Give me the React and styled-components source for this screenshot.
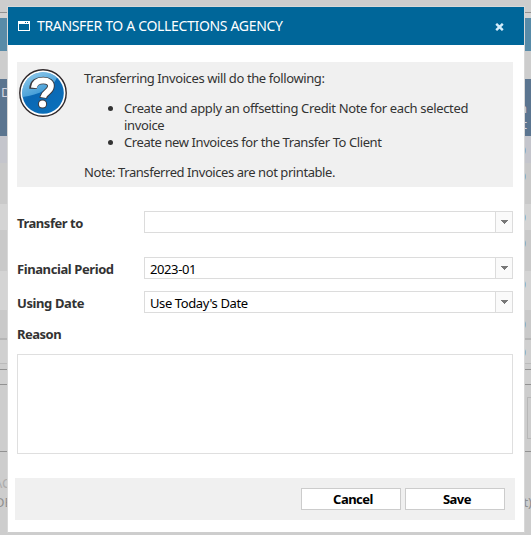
import React from 'react';
import styled, { createGlobalStyle } from 'styled-components';

const Global = createGlobalStyle`
  * { box-sizing: border-box; }
  html, body { margin: 0; padding: 0; overflow: hidden; }
  body { font: 13px/17px "Noto Sans", "Open Sans", sans-serif; color: #333; }
`;

const Screen = styled.div`
  position: relative;
  width: 531px;
  height: 535px;
  overflow: hidden;
  background: #cdcdcd;
`;

const Backdrop = styled.div`
  display: flex;
  flex-direction: column;
  height: 100%;
`;

const Band = styled.div`
  flex: none;
  display: flex;
  justify-content: space-between;
  align-items: ${(p) => p.$align || 'center'};
  height: ${(p) => p.$h}px;
  padding-top: ${(p) => (p.$align ? 5 : 0)}px;
  background: ${(p) => p.$bg || '#cdcdcd'};
  color: ${(p) => p.$fg || '#8f8f8f'};
  line-height: 16px;
  white-space: pre;
`;

const BandLeft = styled.span`
  margin-left: ${(p) => p.$x || 0}px;
`;

const BandRight = styled.span`
  margin-right: ${(p) => p.$x || 0}px;
  text-align: right;
`;

const SideBox = styled.div`
  width: 4px;
  height: 42px;
  margin: 0 0 0 auto;
  border: 1px solid #b7b7b7;
  border-right: 0;
`;

const Dialog = styled.section`
  position: absolute;
  left: 7px;
  top: 6px;
  width: 518px;
  height: 527px;
  display: flex;
  flex-direction: column;
  border: 1px solid #d8d8d8;
  border-bottom-color: #cecece;
  background: #fff;
`;

const TitleBar = styled.header`
  flex: none;
  display: flex;
  align-items: center;
  height: 38px;
  padding: 0 20px 0 10px;
  background: #006699;
  color: #fff;
`;

const Title = styled.h1`
  flex: 1;
  margin: 0 0 0 7px;
  font-size: 14px;
  font-weight: 400;
  line-height: 20px;
  white-space: nowrap;
  letter-spacing: -0.33px;
`;

const CloseButton = styled.button`
  display: flex;
  padding: 2px 0 0;
  border: 0;
  background: none;
`;

const Notice = styled.div`
  flex: none;
  display: flex;
  height: 125px;
  margin: 17px 11px 0 9px;
  padding: 7px 0 0 2px;
  background: #f0f0f0;
`;

const NoticeText = styled.div`
  margin-left: 17px;
  padding-top: 1px;
`;

const Line = styled.div`
  white-space: nowrap;
  letter-spacing: ${(p) => p.$ls || 0}px;
`;

const List = styled.ul`
  margin: 13px 0;
  padding: 0 0 0 40px;
`;

const Form = styled.div`
  display: grid;
  grid-template-columns: 127px 369px;
  grid-auto-rows: 22px;
  row-gap: 12px;
  margin: 24px 11px 0 9px;
`;

const Label = styled.label`
  align-self: center;
  padding-top: 2px;
  font-weight: 700;
  white-space: nowrap;
  letter-spacing: ${(p) => p.$ls || 0}px;
`;

const Select = styled.div`
  display: flex;
  height: 22px;
  border: 1px solid #dcdcdc;
  background: #fff;
  color: #000;
`;

const Value = styled.span`
  flex: 1;
  padding: 3px 0 0 5px;
  line-height: 17px;
  white-space: nowrap;
  letter-spacing: ${(p) => p.$ls || 0}px;
`;

const Trigger = styled.span`
  width: 17px;
  padding: 8px 0 0 5px;
  border-left: 1px solid #dcdcdc;
  background: #fafafa;

  svg { display: block; }
`;

const ReasonLabel = styled(Label)`
  align-self: flex-start;
  margin: 11px 0 0 9px;
`;

const Reason = styled.textarea`
  flex: none;
  height: 100px;
  margin: 11px 11px 0 9px;
  border: 1px solid #dfdfdf;
  background: #fff;
  resize: none;
  outline: 0;
`;

const Footer = styled.footer`
  flex: none;
  display: flex;
  justify-content: flex-end;
  gap: 4px;
  height: 42px;
  margin: 24px 9px 0 7px;
  padding: 10px 10px 0 0;
  background: #f0f0f0;
`;

const Button = styled.button`
  width: 100px;
  height: 22px;
  padding: 0 0 0 4px;
  border: 1px solid #ccc;
  background: #fff;
  color: #000;
  font: 700 13px/20px "Noto Sans", "Open Sans", sans-serif;
  letter-spacing: ${(p) => p.$ls || 0}px;
`;

const WindowIcon = () => (
  <svg width="12" height="10" viewBox="0 0 12 10" shapeRendering="crispEdges">
    <path d="M0 0h12v10H0zM1 3v6h10V3zM7 1v1h1V1zM9 1v1h1V1z" fill="#fff" fillRule="evenodd" />
  </svg>
);

const CloseIcon = () => (
  <svg width="9" height="8" viewBox="0 0 9 8">
    <path d="M1.2.8 7.8 7.2M7.8.8 1.2 7.2" stroke="#d3ecfa" strokeWidth="2.4" />
  </svg>
);

const Caret = () => (
  <svg width="7" height="4" viewBox="0 0 7 4" shapeRendering="crispEdges">
    <path d="M0 0h7v1H6v1H5v1H4v1H3V3H2V2H1V1H0z" fill="#777" />
  </svg>
);

const QuestionIcon = () => (
  <svg width="48" height="48" viewBox="0 0 48 48">
    <defs>
      <linearGradient id="ball" x1="0" y1="0" x2="0.7" y2="1">
        <stop offset="0" stopColor="#3a9ad6" />
        <stop offset="0.5" stopColor="#0a68b4" />
        <stop offset="1" stopColor="#0a6fba" />
      </linearGradient>
      <linearGradient id="gloss" x1="0" y1="0" x2="0.6" y2="1">
        <stop offset="0" stopColor="#a9d8f2" />
        <stop offset="1" stopColor="#3f9fda" />
      </linearGradient>
    </defs>
    <circle cx="24" cy="24" r="23.2" fill="#fff" stroke="#30282a" strokeWidth="1.4" />
    <circle cx="24" cy="24" r="20.8" fill="url(#ball)" />
    <path d="M3.6 28A20.8 20.8 0 0 1 38 8.6C34 19 20 26 3.6 28z" fill="url(#gloss)" opacity=".85" />
    <g fill="none">
      <path d="M14 19.8c.2-5.9 4.6-8.3 10.3-8.3 5.2 0 8 2.5 7.6 6-.6 5.6-6.8 5.7-7.7 11.8" stroke="#3d3a3e" strokeWidth="7.6" />
      <circle cx="23.5" cy="35" r="4.6" fill="#3d3a3e" />
      <path d="M14.8 18.8c.6-5 4.4-7.3 9.5-7.3 5.2 0 8 2.5 7.6 6-.6 5.6-6.8 5.7-7.7 10.9" stroke="#fff" strokeWidth="5.8" />
      <circle cx="23.5" cy="35" r="3.6" fill="#fff" />
    </g>
  </svg>
);

const rows = [
  [27, '#c4c5cc'],
  [41, '#c9c9c9', 'flex-start'],
  [26, '#d4d4d4'],
  [41, '#c9c9c9', 'flex-start'],
  [39, '#d4d4d4', 'flex-start'],
  [28, '#c9c9c9'],
];

const Dropdown = ({ value, ls }) => (
  <Select>
    <Value $ls={ls}>{value}</Value>
    <Trigger><Caret /></Trigger>
  </Select>
);

export default function App() {
  return (
    <Screen>
      <Global />
      <Backdrop>
        <Band $h={12} />
        <Band $h={1} $bg="#929292" />
        <Band $h={5} $bg="#d2d2d2" />
        <Band $h={33} $bg="#588ba8" />
        <Band $h={28} />
        <Band $h={57} $bg="#5b7590" $fg="#d5d5e2" $align="flex-start">
          <BandLeft $x={1}>D</BandLeft>
          <BandRight $x={4}>{' \nn\nt'}</BandRight>
        </Band>
        {rows.map(([h, bg, align], i) => (
          <Band key={i} $h={h} $bg={bg} $fg="#67718f" $align={align}>
            <BandLeft />
            <BandRight $x={5}>0</BandRight>
          </Band>
        ))}
        <Band $h={2} $bg="#b5b5b5" />
        <Band $h={23} $bg="#d0d0d0" $fg="#67718f">
          <BandLeft />
          <BandRight $x={5}>0</BandRight>
        </Band>
        <Band $h={1} $bg="#bbbbbb" />
        <Band $h={5} />
        <Band $h={1} $bg="#929292" />
        <Band $h={14} $bg="#d0d0d0" />
        <Band $h={1} $bg="#929292" />
        <Band $h={66}><SideBox /></Band>
        <Band $h={1} $bg="#929292" />
        <Band $h={22} />
        <Band $h={18} $fg="#acacac"><BandLeft $x={-6}>AC</BandLeft></Band>
        <Band $h={19}>
          <BandLeft $x={-5}>DE</BandLeft>
          <BandRight $x={-1}>t)</BandRight>
        </Band>
      </Backdrop>
      <Dialog>
        <TitleBar>
          <WindowIcon />
          <Title>TRANSFER TO A COLLECTIONS AGENCY</Title>
          <CloseButton aria-label="Close"><CloseIcon /></CloseButton>
        </TitleBar>
        <Notice>
          <QuestionIcon />
          <NoticeText>
            <Line $ls={-0.4}>Transferring Invoices will do the following:</Line>
            <List>
              <li>
                <Line $ls={-0.35}>Create and apply an offsetting Credit Note for each selected</Line>
                <Line $ls={-0.35}>invoice</Line>
              </li>
              <li><Line $ls={-0.41}>Create new Invoices for the Transfer To Client</Line></li>
            </List>
            <Line $ls={-0.43}>Note: Transferred Invoices are not printable.</Line>
          </NoticeText>
        </Notice>
        <Form>
          <Label $ls={-0.45}>Transfer to</Label>
          <Dropdown value="" />
        </Form>
        <Form>
          <Label $ls={-0.41}>Financial Period</Label>
          <Dropdown value="2023-01" ls={-0.4} />
          <Label $ls={-0.4}>Using Date</Label>
          <Dropdown value="Use Today's Date" ls={-0.4} />
        </Form>
        <ReasonLabel $ls={-0.5}>Reason</ReasonLabel>
        <Reason />
        <Footer>
          <Button $ls={-0.5}>Cancel</Button>
          <Button $ls={-0.5}>Save</Button>
        </Footer>
      </Dialog>
    </Screen>
  );
}
